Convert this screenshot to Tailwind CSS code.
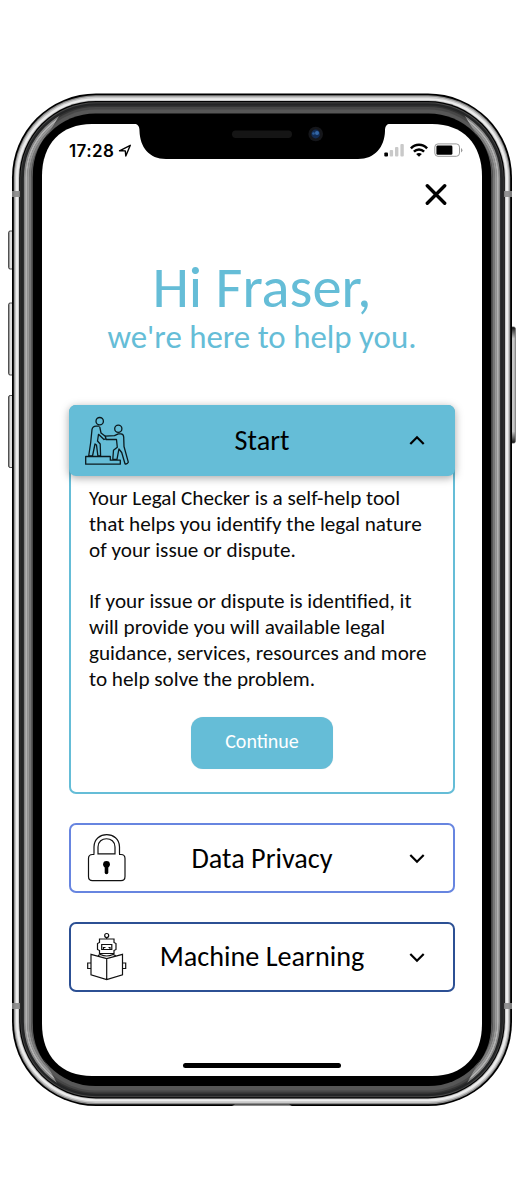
<!DOCTYPE html>
<html lang="en">
<head>
<meta charset="utf-8">
<title>Your Legal Checker</title>
<script src="https://cdn.jsdelivr.net/npm/@tailwindcss/browser@4"></script>
</head>
<body class="relative h-[1200px] w-[525px] overflow-hidden bg-white font-['Carlito','Lato',sans-serif] text-black">
<!-- Phone frame -->
<svg class="absolute inset-0" width="525" height="1200" viewBox="0 0 525 1200" fill="none" aria-hidden="true">
  <defs>
    <linearGradient id="btn" x1="0" x2="1" y1="0" y2="0"><stop offset="0" stop-color="#777"/><stop offset=".45" stop-color="#f2f2f2"/><stop offset="1" stop-color="#aaa"/></linearGradient>
    <linearGradient id="btnR" x1="0" x2="0" y1="0" y2="1"><stop offset="0" stop-color="#111"/><stop offset=".1" stop-color="#c8c8c8"/><stop offset=".9" stop-color="#c8c8c8"/><stop offset="1" stop-color="#111"/></linearGradient>
    <mask id="sides" maskUnits="userSpaceOnUse" x="0" y="90" width="525" height="1020"><path d="M0 113H61L43 142V1058L58 1085H0zM525 113H463L481 142V1058L466 1085H525z" fill="#fff"/></mask>
  </defs>
  <g stroke="#222" stroke-width=".8">
    <rect x="8.6" y="231" width="5" height="38" rx="1.5" fill="url(#btn)"/>
    <rect x="8.6" y="303" width="5" height="72" rx="1.5" fill="url(#btn)"/>
    <rect x="8.6" y="395.500" width="5" height="72" rx="1.5" fill="url(#btn)"/>
    <rect x="510.500" y="327" width="4.800" height="116" rx="1.5" fill="url(#btnR)" stroke="#555"/>
  </g>
  <rect x="12" y="93.500" width="500" height="1012.500" rx="84" fill="#000"/>
  <rect x="13.800" y="95.300" width="496.400" height="1009" rx="82" fill="#8c8c8c"/>
  <rect x="14.800" y="96.600" width="494.400" height="1006.300" rx="81" fill="#c8c8c8"/>
  <rect x="16" y="98.300" width="492" height="1003" rx="79.500" fill="#ececec"/>
  <rect x="18.300" y="100.300" width="487.400" height="999" rx="77.700" fill="#bcbcbc"/>
  <rect x="19.200" y="101" width="485.600" height="997.500" rx="76.800" fill="#000"/>
  <rect x="20.400" y="102.300" width="483.200" height="995" rx="75.600" fill="#4a4a4a"/>
  <rect x="21" y="103.300" width="482" height="993" rx="75" fill="#242526"/>
  <rect x="24" y="105.500" width="476" height="988.500" rx="72" fill="#333"/>
  <rect x="25" y="107" width="474" height="985.500" rx="71" fill="#474747"/>
  <rect x="28" y="109.500" width="468" height="981" rx="68" fill="#575757"/>
  <rect x="31.500" y="113.500" width="461" height="972.500" rx="64" fill="#000"/>
  <g mask="url(#sides)">
    <rect x="24.600" y="106.600" width="474.800" height="986.800" rx="71.400" stroke="#858585" stroke-width="1.400"/>
    <rect x="26.200" y="108.200" width="471.600" height="983.600" rx="69.800" stroke="#b2b2b2" stroke-width="2"/>
    <rect x="28.100" y="110.100" width="467.800" height="979.800" rx="67.900" stroke="#989898" stroke-width="2"/>
    <rect x="30" y="112" width="464" height="976" rx="66" stroke="#787878" stroke-width="2"/>
    <rect x="31.900" y="113.900" width="460.200" height="972.200" rx="64.100" stroke="#585858" stroke-width="1.800"/>
    <rect x="40" y="120" width="444" height="960" rx="54" stroke="#000" stroke-width="14"/>
  </g>
  <path d="M12 191h8v6h-8zM504 191h8v6h-8zM12 1003h8v6h-8zM504 1003h8v6h-8z" fill="#8a8a8a" fill-opacity=".9"/>
  <path d="M232 1106l3-1.500h54l3 1.500z" fill="#8a8a8a"/>
  <!-- Display and notch -->
  <path d="M92 124H432C463 124 482 144 482 176V1024C482 1056 463 1076 432 1076H92C61 1076 42 1056 42 1024V176C42 144 61 124 92 124Z" fill="#fff"/>
  <path d="M132 123.500C138 123.500 139.500 126 139.500 131C140 147 149 159 166 159H358C375 159 384.500 147 385 131C385 126 386.500 123.500 392 123.500Z" fill="#000"/>
  <rect x="232" y="130.500" width="60" height="7.500" rx="3.700" fill="#151515"/>
  <circle cx="315.700" cy="134" r="7.300" fill="#15161a"/><circle cx="315.700" cy="134" r="4.400" fill="#122c55"/><circle cx="317" cy="133" r="2" fill="#3468a8"/><circle cx="313.500" cy="133.500" r="1.300" fill="#2c5c99"/>
</svg>

<main class="relative mt-[124px] ml-[42px] flex h-[952px] w-[440px] flex-col px-[27px]">
  <header class="flex h-[52px] items-center justify-between">
    <div class="flex items-center gap-1 pt-px font-['Inter',sans-serif] text-[17px] leading-[20px] font-semibold tracking-[0.4px]">
      <span>17:28</span>
      <svg width="14" height="14" viewBox="0 0 14 14" fill="none" stroke="#000" stroke-width="1.400" stroke-linejoin="round"><path d="M1.500 6.800L12.300 1.300L7.800 12L7.300 6.900Z"/></svg>
    </div>
    <div class="-mr-2 flex items-center gap-[6px]">
      <svg width="20" height="14" viewBox="0 0 20 14"><rect x=".3" y="9.500" width="3.700" height="4" rx="1"/><g fill="#c9c9c9"><rect x="5.700" y="7" width="3.400" height="6.500" rx="1"/><rect x="11" y="4" width="3.400" height="9.500" rx="1"/><rect x="16.400" y="1" width="3.400" height="12.500" rx="1"/></g></svg>
      <svg width="18" height="14" viewBox="0 0 18 14" fill="none" stroke="#000" stroke-width="2.500"><path d="M.9 5.300C5.400.5 12.600.5 17.100 5.300M3.900 8.700C6.800 5.800 11.200 5.800 14.100 8.700"/><path d="M6.100 11Q9 8.800 11.900 11L9 13.800Z" fill="#000" stroke="none"/></svg>
      <svg width="29" height="14" viewBox="0 0 29 14"><rect x=".8" y=".9" width="24.700" height="12.400" rx="3.200" fill="none" stroke="#999"/><rect x="2.400" y="2.500" width="16" height="9.200" rx="1.300"/><path d="M27 5v4.400q1.400-.8 1.400-2.200T27 5z" fill="#999"/></svg>
    </div>
  </header>
  <button class="mr-[8px] self-end pt-[8px]" aria-label="Close">
    <svg width="22" height="22" viewBox="0 0 22 22" stroke="#000" stroke-width="3.400" stroke-linecap="round"><path d="M2.300 1.800L19.700 19.200M19.700 1.800L2.300 19.200"/></svg>
  </button>

  <section class="mt-[51px] h-[148px] text-center text-[#65bdd7]">
    <h1 class="text-[58.500px] leading-[60px]">Hi Fraser,</h1>
    <p class="mt-px text-[32.900px] leading-[38px]">we're here to help you.</p>
  </section>

  <section class="h-[389px] w-[386px] shrink-0 rounded-[7px] border-[2.500px] border-[#65bdd7]">
    <div class="-mx-[2px] -mt-[2px] flex h-[71px] items-center rounded-[7px] bg-[#65bdd7] pr-[30px] pl-[15px] shadow-[0_2px_8px_rgba(0,0,0,0.35)]">
      <svg class="shrink-0" width="46" height="50" viewBox="84 415.500 46 50" fill="none" stroke="#0b1a1e" stroke-width="1.300" stroke-linejoin="round" stroke-linecap="round">
        <circle cx="99.700" cy="420.700" r="3.700"/><circle cx="118.300" cy="428.300" r="3.600"/>
        <path d="M85.700 456H110.300V459.700H120.300V463.700H85.700Z"/>
        <path d="M98.800 425.700H96Q92.700 425.700 92 429L90.700 442L88.700 455.500H92.500L95 443.500L96.500 444.500L97.900 455.500H100.600L100.200 443.500L97.500 440.500L98.500 433.800L104 439L106 438.200L105.300 435.700L101 432.500L99.800 426.700"/>
        <path d="M105.300 435.700L114.500 435.200L118.300 433.300H121Q123.500 433.300 123.700 436.500L124 446L128.300 461.700Q127.200 464 125 463.300L121.700 452L118.900 448.500L117 458.800H112.800L113.500 449.800L117.300 446.700L116.500 439L106 439"/>
      </svg>
      <h2 class="flex-1 text-center text-[28.200px] leading-[34px]"><span class="relative left-[-7.500px]">Start</span></h2>
      <svg width="16" height="11" viewBox="0 0 16 11" fill="none" stroke="#000" stroke-width="2.200"><path d="M1.300 9L8 2.300L14.700 9"/></svg>
    </div>
    <div class="pt-[10px] pl-[18px] text-[21.200px] leading-[25.850px] whitespace-nowrap text-[#0a0a0a]">
      <p>Your Legal Checker is a self-help tool<br>that helps you identify the legal nature<br>of your issue or dispute.</p>
      <p class="mt-[25.850px]">If your issue or dispute is identified, it<br>will provide you will available legal<br>guidance, services, resources and more<br>to help solve the problem.</p>
    </div>
    <div class="mt-[24px] flex justify-center">
      <button class="h-[52px] w-[142px] rounded-[12px] bg-[#65bdd7] pb-[3px] text-[20px] leading-[24px] text-white shadow-[0_0_1px_rgba(0,0,0,0.15)]">Continue</button>
    </div>
  </section>

  <section class="mt-[29px] flex h-[70px] w-[386px] items-center rounded-[7px] border-[2.500px] border-[#6785e0] pr-[28px] pl-[15px]">
    <svg class="shrink-0" width="42" height="50" viewBox="86 833 42 50" fill="none" stroke="#111" stroke-width="1.200"><path d="M94 854.500H92.500Q88.500 854.500 88.500 858.500V876.500Q88.500 880.700 92.500 880.700H121Q125 880.700 125 876.500V858.500Q125 854.500 121 854.500H119.500V847C119.500 830.500 94 830.500 94 847Z"/><path d="M94.700 854.500H119" stroke="#fff" stroke-width="2"/><path d="M98 853.800V847C98 836 115 836 115 847V853.800Z"/><circle cx="106.500" cy="864.300" r="3.400" fill="#000" stroke="none"/><path d="M106.500 865V872.500" stroke="#000" stroke-width="3.600" stroke-linecap="round"/></svg>
    <h2 class="flex-1 pt-px pr-[13px] text-center text-[28.200px] leading-[34px] whitespace-nowrap">Data Privacy</h2>
    <svg width="16" height="11" viewBox="0 0 16 11" fill="none" stroke="#000" stroke-width="2.200"><path d="M1.300 2L8 8.700L14.700 2"/></svg>
  </section>

  <section class="mt-[29px] flex h-[70px] w-[386px] items-center rounded-[7px] border-[2.500px] border-[#2c5094] pr-[28px] pl-[15px]">
    <svg class="shrink-0" width="42" height="50" viewBox="86 932 42 50" fill="none" stroke="#111" stroke-width="1.200"><circle cx="106.700" cy="935.500" r="2"/><path d="M106.700 937.500V939M99.500 939H114V942.500L116 943.500V949.500L114 950.500V953.500H99.500V950.500L97.500 949.500V943.500L99.500 942.500ZM101.700 944.500H111.800V949.500H101.700ZM103.500 949.500V947.500H105.500M108.500 947.500H110V949.500"/><path d="M91 954.300L106.700 958.700L122.500 954.300V974.800L106.700 979.500L91 974.800ZM106.700 958.700V979.500M91 963H87.700V968.500H91M122.500 963H125.700V968.500H122.500M98 955.500L100.500 954.500Q106.500 957.500 113 954.500L115.500 955.500"/></svg>
    <h2 class="flex-1 pr-[13px] text-center text-[28.200px] leading-[34px] whitespace-nowrap">Machine Learning</h2>
    <svg width="16" height="11" viewBox="0 0 16 11" fill="none" stroke="#000" stroke-width="2.200"><path d="M1.300 2L8 8.700L14.700 2"/></svg>
  </section>

  <div class="mt-auto mb-[8px] h-[5px] w-[158px] self-center rounded-full bg-black"></div>
</main>
</body>
</html>
